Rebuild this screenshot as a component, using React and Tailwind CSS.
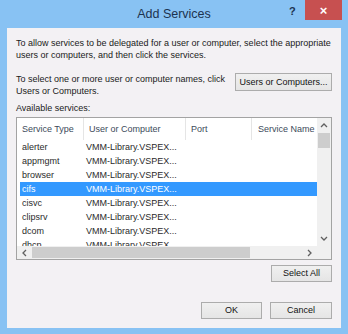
const rows = [
  { type: 'alerter', host: 'VMM-Library.VSPEX...' },
  { type: 'appmgmt', host: 'VMM-Library.VSPEX...' },
  { type: 'browser', host: 'VMM-Library.VSPEX...' },
  { type: 'cifs', host: 'VMM-Library.VSPEX...', selected: true },
  { type: 'cisvc', host: 'VMM-Library.VSPEX...' },
  { type: 'clipsrv', host: 'VMM-Library.VSPEX...' },
  { type: 'dcom', host: 'VMM-Library.VSPEX...' },
  { type: 'dhcp', host: 'VMM-Library.VSPEX...' },
]

const btn =
  'flex items-center justify-center border border-[#acacac] bg-gradient-to-b from-[#f0f0f0] to-[#e5e5e5] text-[9px] leading-none text-[#111]'

function Chevron({ dir }) {
  const pts = {
    up: '1,5 4,2 7,5',
    down: '1,2 4,5 7,2',
    left: '5,1 2,4 5,7',
    right: '2,1 5,4 2,7',
  }[dir]
  return (
    <svg width="8" height="8" viewBox="0 0 8 8">
      <polyline points={pts} fill="none" stroke="#606060" strokeWidth="1.3" />
    </svg>
  )
}

export default function App() {
  return (
    <div className="flex h-[334px] w-[348px] flex-col bg-[#88c2f3] font-['Liberation_Sans',Arial,sans-serif] text-[#1a1a1a]">
      {/* title bar */}
      <div className="relative flex h-[28px] shrink-0 items-center justify-center">
        <span className="text-[12.5px] text-[#1c3350]">Add Services</span>
        <span className="absolute left-[289px] top-[3px] text-[11px] font-bold text-[#1c3350]">?</span>
        <div className="absolute right-[6px] top-0 flex h-[20px] w-[37px] items-center justify-center bg-[#c75050] text-[13px] font-bold leading-none text-white">
          ×
        </div>
      </div>

      {/* dialog body */}
      <div className="mx-[7px] mb-[6px] flex flex-1 flex-col bg-[#f3f1f4] px-[9px] pt-[9px] text-[9px] leading-[12px]">
        <p>
          To allow services to be delegated for a user or computer, select the appropriate
          <br />
          users or computers, and then click the services.
        </p>

        <div className="mt-[12px] flex items-start justify-between">
          <p>
            To select one or more user or computer names, click
            <br />
            Users or Computers.
          </p>
          <button className={`${btn} h-[18px] w-[97px]`}>Users or Computers...</button>
        </div>

        <p className="mt-[5px]">Available services:</p>

        {/* list view */}
        <div className="mt-[3px] grid h-[143px] grid-cols-[1fr_14px] grid-rows-[1fr_13px] border border-[#a3a3a3] bg-white text-[#2b2b2b]">
          <div className="overflow-hidden">
            <div className="flex h-[22px] items-center text-[#3c4a5a]">
              <div className="w-[66px] pl-[5px]">Service Type</div>
              <div className="flex h-full w-[102px] items-center border-l border-[#e5e5e5] pl-[5px]">User or Computer</div>
              <div className="flex h-full w-[66px] items-center border-l border-[#e5e5e5] pl-[5px]">Port</div>
              <div className="flex h-full flex-1 items-center whitespace-nowrap border-l border-[#e5e5e5] pl-[6px]">Service Name</div>
            </div>
            {rows.map((r) => (
              <div
                key={r.type}
                className={`ml-[3px] flex h-[14px] w-[297px] items-center ${r.selected ? 'bg-[#3399ff] text-white' : ''}`}
              >
                <span className="w-[66px] pl-[2px]">{r.type}</span>
                <span>{r.host}</span>
              </div>
            ))}
          </div>

          {/* vertical scrollbar */}
          <div className="flex flex-col bg-[#f0f0f0]">
            <div className="flex h-[15px] items-center justify-center">
              <Chevron dir="up" />
            </div>
            <div className="mx-[1px] h-[15px] bg-[#cdcdcd]" />
            <div className="flex-1" />
            <div className="flex h-[15px] items-center justify-center">
              <Chevron dir="down" />
            </div>
          </div>

          {/* horizontal scrollbar */}
          <div className="flex bg-[#f0f0f0]">
            <div className="flex w-[15px] items-center justify-center">
              <Chevron dir="left" />
            </div>
            <div className="my-[1px] w-[218px] bg-[#cdcdcd]" />
            <div className="flex-1" />
            <div className="flex w-[15px] items-center justify-center">
              <Chevron dir="right" />
            </div>
          </div>
          <div className="bg-[#f0f0f0]" />
        </div>

        <div className="mt-[5px] flex justify-end">
          <button className={`${btn} h-[17px] w-[61px]`}>Select All</button>
        </div>

        <div className="mt-[20px] flex justify-end gap-[8px]">
          <button className={`${btn} h-[17px] w-[61px] border-[#3c8fe0]`}>OK</button>
          <button className={`${btn} h-[17px] w-[62px]`}>Cancel</button>
        </div>
      </div>
    </div>
  )
}
